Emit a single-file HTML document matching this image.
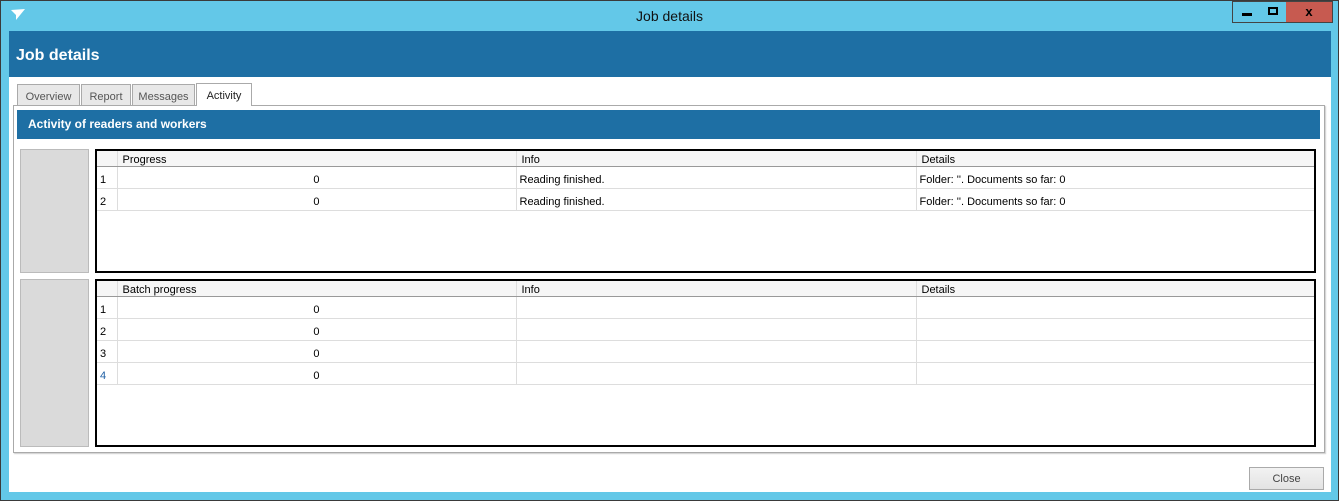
<!DOCTYPE html><html><head><style>
*{margin:0;padding:0;box-sizing:border-box}
body{width:1339px;height:501px;background:#63c8e8;position:relative;overflow:hidden;font-family:"Liberation Sans",sans-serif;font-size:11px;color:#000}
.abs{position:absolute}
.frame{left:0;top:0;width:1339px;height:501px;border:1px solid #3a3a3a}
.title{left:0;top:8px;width:1339px;text-align:center;font-size:14px;color:#111}
.btn{top:1px;height:22px;border:1px solid #444;background:#63c8e8}
.hdr{left:9px;top:31px;width:1322px;height:46px;background:#1e6fa4;color:#fff;font-weight:bold;font-size:16px;padding:16px 0 0 7px}
.bodyw{left:9px;top:77px;width:1322px;height:415px;background:#fff}
.tab{top:84px;height:21px;border:1px solid #aaa;border-bottom:none;background:#e8e8e8;color:#555;padding:6px 0 0 0;text-align:center;font-size:11px}
.panel{left:13px;top:105px;width:1312px;height:348px;border:1px solid #aaa;box-shadow:1px 1px 1px #ccc;background:#fff}
.bar{left:17px;top:110px;width:1303px;height:29px;background:#1e6fa4;color:#fff;font-weight:bold;font-size:12px;padding:7px 0 0 11px}
.gray{left:20px;width:69px;background:#dadada;border:1px solid #bbb}
table{position:absolute;left:95px;width:1221px;border:2px solid #000;border-collapse:collapse;background:#fff}
td{height:22px;border-right:1px solid #ddd;border-bottom:1px solid #ddd;padding:4px 3px 0;white-space:nowrap;vertical-align:middle}
tr.h td{height:16px;background:#f6f6f6;border-bottom:1px solid #999;padding:3px 0 0 5px}
td.n{width:21px;padding-left:3px}
td.p{width:399px;text-align:right;padding-right:196px}
td.i{width:400px}
.close{left:1249px;top:467px;width:75px;height:23px;border:1px solid #aaa;background:linear-gradient(#f2f2f2,#e3e3e3);text-align:center;padding-top:5px;color:#444;font-size:11px}
</style></head><body>
<div class="abs frame"></div>
<svg class="abs" style="left:11px;top:9px" width="14" height="12" viewBox="0 0 14 12"><path d="M0 1 L14 0 L5 11 L5 6 Z" fill="#fff"/></svg>
<div class="abs title">Job details</div>
<div class="abs btn" style="left:1232px;width:29px"><div class="abs" style="left:9px;top:11px;width:10px;height:3px;background:#000"></div></div>
<div class="abs btn" style="left:1260px;width:27px;border-left:none"><div class="abs" style="left:8px;top:5px;width:10px;height:8px;border:2px solid #000"></div></div>
<div class="abs btn" style="left:1286px;width:47px;background:#c75a50;border-left:none;text-align:center;font-weight:bold;font-size:13px;padding-top:2px">x</div>
<div class="abs hdr">Job details</div>
<div class="abs bodyw"></div>
<div class="abs panel"></div>
<div class="abs tab" style="left:17px;width:63px">Overview</div>
<div class="abs tab" style="left:81px;width:50px">Report</div>
<div class="abs tab" style="left:132px;width:63px">Messages</div>
<div class="abs tab" style="left:196px;width:56px;top:83px;height:23px;background:#fff;color:#222">Activity</div>
<div class="abs bar">Activity of readers and workers</div>
<div class="abs gray" style="top:149px;height:124px"></div>
<div class="abs gray" style="top:279px;height:168px"></div>
<table style="top:149px;height:124px"><tr class="h"><td class="n"></td><td style="width:399px">Progress</td><td class="i">Info</td><td>Details</td></tr>
<tr><td class="n">1</td><td class="p">0</td><td class="i">Reading finished.</td><td>Folder: ''. Documents so far: 0</td></tr>
<tr><td class="n">2</td><td class="p">0</td><td class="i">Reading finished.</td><td>Folder: ''. Documents so far: 0</td></tr>
<tr><td colspan="4" style="border:none;height:auto"></td></tr></table>
<table style="top:279px;height:168px"><tr class="h"><td class="n"></td><td style="width:399px">Batch progress</td><td class="i">Info</td><td>Details</td></tr>
<tr><td class="n">1</td><td class="p">0</td><td class="i"></td><td></td></tr>
<tr><td class="n">2</td><td class="p">0</td><td class="i"></td><td></td></tr>
<tr><td class="n">3</td><td class="p">0</td><td class="i"></td><td></td></tr>
<tr><td class="n" style="color:#1e5fa4">4</td><td class="p">0</td><td class="i"></td><td></td></tr>
<tr><td colspan="4" style="border:none;height:auto"></td></tr></table>
<div class="abs close">Close</div>
</body></html>
